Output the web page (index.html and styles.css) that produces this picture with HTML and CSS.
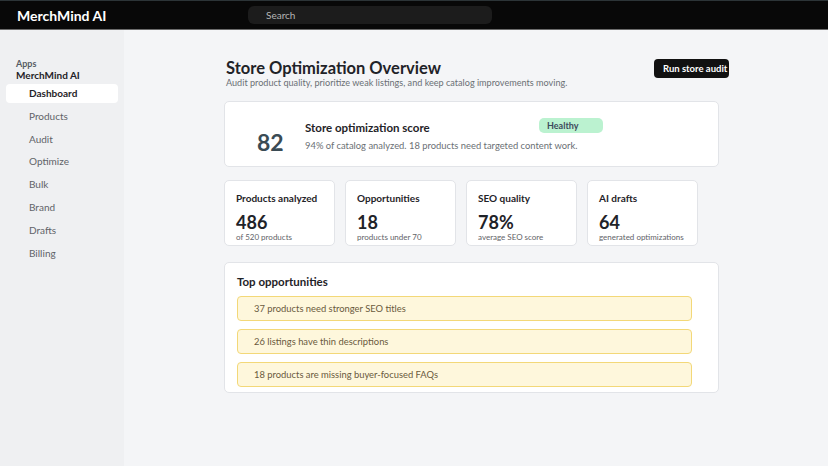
FILE: index.html
```html
<!DOCTYPE html>
<html lang="en">

<head>
    <meta charset="UTF-8">
    <title>MerchMind AI</title>
    <link rel="stylesheet" href="styles.css">
</head>

<body>
    <div class="topbar">
        <div class="brand">MerchMind AI</div>
        <div class="search">Search</div>
    </div>

    <div class="layout">
        <div class="sidebar">
            <div class="apps-label">Apps</div>
            <div class="app-name">MerchMind AI</div>
            <div class="nav-item active">Dashboard</div>
            <div class="nav-item">Products</div>
            <div class="nav-item">Audit</div>
            <div class="nav-item">Optimize</div>
            <div class="nav-item">Bulk</div>
            <div class="nav-item">Brand</div>
            <div class="nav-item">Drafts</div>
            <div class="nav-item">Billing</div>
        </div>

        <div class="main">
            <div class="page-head">
                <div>
                    <h1>Store Optimization Overview</h1>
                    <p class="subtitle">Audit product quality, prioritize weak listings, and keep catalog improvements moving.</p>
                </div>
                <button class="audit-button">Run store audit</button>
            </div>

            <div class="card score-card">
                <div class="score">82</div>
                <div class="score-info">
                    <div class="score-title">Store optimization score</div>
                    <div class="score-text">94% of catalog analyzed. 18 products need targeted content work.</div>
                </div>
                <span class="badge">Healthy</span>
            </div>

            <div class="stats">
                <div class="card stat">
                    <div class="stat-title">Products analyzed</div>
                    <div class="stat-value">486</div>
                    <div class="stat-note">of 520 products</div>
                </div>
                <div class="card stat">
                    <div class="stat-title">Opportunities</div>
                    <div class="stat-value">18</div>
                    <div class="stat-note">products under 70</div>
                </div>
                <div class="card stat">
                    <div class="stat-title">SEO quality</div>
                    <div class="stat-value">78%</div>
                    <div class="stat-note">average SEO score</div>
                </div>
                <div class="card stat">
                    <div class="stat-title">AI drafts</div>
                    <div class="stat-value">64</div>
                    <div class="stat-note">generated optimizations</div>
                </div>
            </div>

            <div class="card opportunities">
                <div class="section-title">Top opportunities</div>
                <div class="opportunity">37 products need stronger SEO titles</div>
                <div class="opportunity">26 listings have thin descriptions</div>
                <div class="opportunity">18 products are missing buyer-focused FAQs</div>
            </div>
        </div>
    </div>
</body>

</html>
```

FILE: styles.css
```css
html,
body {
    margin: 0;
    height: 100%;
    font-family: Lato, "Noto Sans", sans-serif;
    color: #1f2328;
}

.topbar {
    display: flex;
    align-items: center;
    height: 28px;
    background-color: #080808;
    border-top: 1px solid #2c3437;
    border-bottom: 1px solid #6b6b6b;
}

.brand {
    width: 231px;
    padding-left: 17px;
    color: #ffffff;
    font-size: 14px;
    font-weight: 700;
}

.search {
    width: 226px;
    height: 18px;
    padding-left: 18px;
    line-height: 18px;
    border-radius: 6px;
    background-color: #1c1c1c;
    color: #b5b5b5;
    font-size: 10px;
}

.layout {
    display: flex;
    height: calc(100% - 30px);
}

.sidebar {
    width: 112px;
    padding: 28px 6px 0;
    background-color: #eff0f2;
}

.apps-label {
    padding-left: 10px;
    color: #555c63;
    font-size: 9px;
    font-weight: 700;
    line-height: 11px;
}

.app-name {
    padding-left: 10px;
    font-size: 10px;
    font-weight: 700;
    line-height: 13px;
    margin-bottom: 2px;
}

.nav-item {
    height: 19px;
    line-height: 19px;
    margin-bottom: 3.8px;
    padding-left: 23px;
    border-radius: 4px;
    color: #5f6368;
    font-size: 10px;
}

.nav-item.active {
    background-color: #ffffff;
    color: #1f2328;
    font-weight: 700;
}

.main {
    flex: 1;
    padding: 29px 0 0 100px;
    background-color: #f4f5f7;
}

.page-head {
    display: flex;
    justify-content: space-between;
    align-items: flex-start;
    width: 505px;
    margin-bottom: 13px;
}

.page-head h1 {
    margin: 0 0 0 2px;
    font-size: 16.5px;
    line-height: 19px;
    font-weight: 700;
}

.subtitle {
    margin: -1px 0 0 2px;
    color: #6b7075;
    font-size: 9.1px;
}

.audit-button {
    height: 19px;
    padding: 0 0 0 9px;
    width: 75px;
    border: none;
    border-radius: 4px;
    background-color: #111111;
    color: #ffffff;
    font-family: inherit;
    font-size: 9.5px;
    font-weight: 700;
    text-align: left;
    white-space: nowrap;
}

.card {
    background-color: #ffffff;
    border: 1px solid #e2e4e8;
    border-radius: 5px;
    box-sizing: border-box;
}

.score-card {
    display: flex;
    align-items: flex-start;
    width: 495px;
    height: 66px;
    padding: 14px 0 0 32px;
    margin-bottom: 13px;
}

.score {
    width: 48px;
    margin-top: 13px;
    color: #3a4b54;
    font-size: 23px;
    font-weight: 700;
    line-height: 26px;
}

.score-info {
    width: 234px;
}

.score-title {
    margin-top: 4px;
    font-size: 11.5px;
    font-weight: 700;
    line-height: 16px;
}

.score-text {
    margin-top: 3px;
    width: 300px;
    color: #6b7075;
    font-size: 9.4px;
    line-height: 13px;
}

.badge {
    width: 56px;
    height: 15px;
    margin-top: 2px;
    padding-left: 8px;
    line-height: 15px;
    border-radius: 5px;
    background-color: #bbf2d0;
    color: #3d4a5c;
    font-size: 9px;
    font-weight: 700;
}

.stats {
    display: flex;
    gap: 10px;
    margin-bottom: 16px;
}

.stat {
    width: 111px;
    height: 66px;
    padding: 11px 0 0 11px;
}

.stat-title {
    font-size: 10px;
    font-weight: 700;
    line-height: 13px;
}

.stat-value {
    margin-top: 7px;
    font-size: 18px;
    font-weight: 700;
    line-height: 20px;
}

.stat-note {
    color: #5f6368;
    font-size: 8px;
    line-height: 10px;
}

.opportunities {
    width: 495px;
    height: 131px;
    padding: 11px 0 0 12px;
}

.section-title {
    margin-bottom: 6px;
    font-size: 11.5px;
    font-weight: 700;
    line-height: 16px;
}

.opportunity {
    width: 455px;
    height: 25px;
    margin-bottom: 8px;
    padding-left: 16px;
    box-sizing: border-box;
    line-height: 23px;
    border: 1px solid #f3d878;
    border-radius: 4px;
    background-color: #fef7dc;
    color: #6a5a3c;
    font-size: 9.4px;
}
```
